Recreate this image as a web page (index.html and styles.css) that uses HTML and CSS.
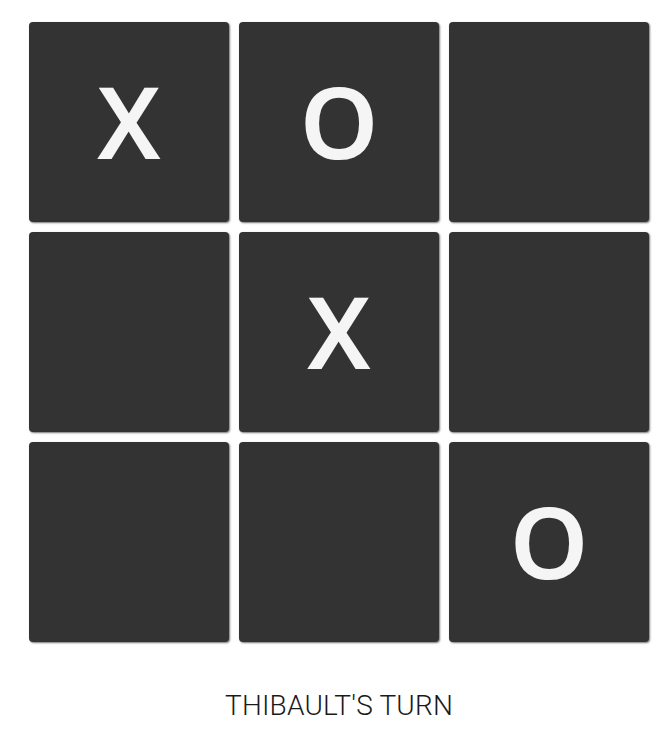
FILE: index.html
```html
<!DOCTYPE html>
<html>
<head>
<meta charset="utf-8">
<link rel="stylesheet" href="styles.css">
</head>
<body>
<div class="game">
  <div class="board">
    <div class="cell">X</div>
    <div class="cell">O</div>
    <div class="cell"></div>
    <div class="cell"></div>
    <div class="cell">X</div>
    <div class="cell"></div>
    <div class="cell"></div>
    <div class="cell"></div>
    <div class="cell">O</div>
  </div>
  <div class="status">THIBAULT'S TURN</div>
</div>
</body>
</html>
```
FILE: styles.css
```css
html, body {
  margin: 0;
  padding: 0;
  background: #fff;
}
.game {
  padding: 22px 0 0 29px;
  width: 620px;
}
.board {
  display: grid;
  grid-template-columns: repeat(3, 200px);
  grid-template-rows: repeat(3, 200px);
  gap: 10px;
}
.cell {
  background: #333333;
  border-radius: 4px;
  box-shadow: 1px 1px 2px rgba(0,0,0,0.55);
  color: #f5f5f5;
  font-family: "Noto Sans", "Liberation Sans", sans-serif;
  font-weight: 600;
  font-size: 100px;
  display: flex;
  align-items: center;
  justify-content: center;
  line-height: 1;
  padding-bottom: 4px;
  box-sizing: border-box;
}
.status {
  margin-top: 47px;
  text-align: center;
  font-family: Roboto, sans-serif;
  font-weight: 300;
  font-size: 28px;
  color: #1a1a1a;
  letter-spacing: 0.2px;
}
```
